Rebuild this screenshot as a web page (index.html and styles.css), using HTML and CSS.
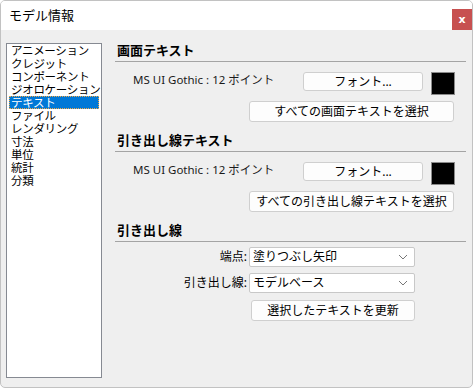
FILE: index.html
```html
<!DOCTYPE html>
<html lang="ja">
<head>
  <meta charset="UTF-8">
  <title>モデル情報</title>
  <link rel="stylesheet" href="styles.css">
</head>
<body>

  <div class="window">
    <div class="titlebar">
      <span class="title">モデル情報</span>
      <button class="close">x</button>
    </div>

    <div class="content">
      <ul class="list">
        <li>アニメーション</li>
        <li>クレジット</li>
        <li>コンポーネント</li>
        <li>ジオロケーション</li>
        <li class="selected">テキスト</li>
        <li>ファイル</li>
        <li>レンダリング</li>
        <li>寸法</li>
        <li>単位</li>
        <li>統計</li>
        <li>分類</li>
      </ul>

      <div class="pane">
        <div class="section">
          <h2>画面テキスト</h2>
          <div class="font-row">
            <span class="font-name">MS UI Gothic : 12 ポイント</span>
            <button class="btn font-btn">フォント...</button>
            <span class="swatch"></span>
          </div>
          <div class="select-row">
            <button class="btn select-btn">すべての画面テキストを選択</button>
          </div>
        </div>

        <div class="section">
          <h2>引き出し線テキスト</h2>
          <div class="font-row">
            <span class="font-name">MS UI Gothic : 12 ポイント</span>
            <button class="btn font-btn">フォント...</button>
            <span class="swatch"></span>
          </div>
          <div class="select-row">
            <button class="btn select-btn">すべての引き出し線テキストを選択</button>
          </div>
        </div>

        <div class="section">
          <h2>引き出し線</h2>
          <div class="form">
            <label>端点:</label>
            <div class="dropdown">
              <span>塗りつぶし矢印</span>
              <svg width="10" height="6" viewBox="0 0 10 6"><path d="M1 1 L5 5 L9 1" fill="none" stroke="#777" stroke-width="1"/></svg>
            </div>
            <label>引き出し線:</label>
            <div class="dropdown">
              <span>モデルベース</span>
              <svg width="10" height="6" viewBox="0 0 10 6"><path d="M1 1 L5 5 L9 1" fill="none" stroke="#777" stroke-width="1"/></svg>
            </div>
            <span></span>
            <button class="btn update-btn">選択したテキストを更新</button>
          </div>
        </div>
      </div>
    </div>
  </div>

</body>
</html>
```

FILE: styles.css
```css
body {
  margin: 0;
  font-family: "Noto Sans", "Noto Sans CJK JP", sans-serif;
  font-size: 12px;
  color: #000;
  background: #fff;
}

.window {
  width: 473px;
  height: 388px;
  box-sizing: border-box;
  border: 1px solid #c2c2c2;
  border-radius: 5px;
  background: #efefef;
  overflow: hidden;
}

.titlebar {
  height: 29px;
  background: #fff;
  display: flex;
  justify-content: space-between;
  align-items: flex-end;
}

.title {
  align-self: center;
  margin-left: 8px;
  font-size: 13px;
  line-height: 16px;
  padding-bottom: 1px;
}

.close {
  width: 20px;
  height: 21px;
  margin: 0;
  padding: 0;
  border: none;
  background: #c75050;
  color: #fff;
  font-family: "DejaVu Sans", sans-serif;
  font-weight: bold;
  font-size: 11px;
  line-height: 19px;
}

.content {
  display: flex;
  padding: 13px 0 0 5px;
}

.list {
  list-style: none;
  margin: 0;
  padding: 0 2px;
  width: 90px;
  height: 333px;
  background: #fff;
  border: 1px solid #868a92;
  font-size: 11.5px;
  letter-spacing: -0.3px;
}

.list li {
  height: 13px;
  line-height: 13px;
  padding-left: 2px;
  white-space: nowrap;
}

.list li.selected {
  background: #0078d7;
  color: #fff;
  outline: 1px dotted #f0a848;
  outline-offset: -1px;
}

.pane {
  flex: 1;
  margin-left: 13px;
  margin-right: 6px;
  margin-top: -3px;
}

.section {
  margin-bottom: 8px;
}

.section h2 {
  margin: 0;
  font-size: 13px;
  font-weight: bold;
  line-height: 20px;
  height: 21px;
  padding-left: 2px;
  border-bottom: 1px solid #a4a4a4;
}

.font-row {
  display: flex;
  align-items: center;
  margin-top: 9px;
  height: 24px;
  margin-right: 11px;
}

.font-name {
  margin-left: 18px;
  margin-top: -7px;
  line-height: 14px;
  font-size: 11.5px;
  color: #1a1a1a;
}

.btn {
  margin: 0;
  padding: 0;
  font-family: inherit;
  font-size: 12px;
  color: #000;
  background: #fdfdfd;
  border: 1px solid #cfcfcf;
  border-radius: 3px;
  line-height: 16px;
}

.font-btn {
  margin-left: auto;
  width: 120px;
  height: 19px;
  margin-top: -3px;
}

.swatch {
  width: 22px;
  height: 21px;
  margin-left: 8px;
  background: #000;
  border: 1px solid #8a8a8a;
}

.select-row {
  display: flex;
  justify-content: flex-end;
  margin-top: 6px;
  margin-right: 12px;
}

.select-btn {
  width: 205px;
  height: 21px;
}

.form {
  display: grid;
  grid-template-columns: 132px 166px;
  column-gap: 2px;
  row-gap: 6px;
  align-items: center;
  margin-top: 5px;
}

.form label {
  text-align: right;
  line-height: 16px;
}

.dropdown {
  height: 18px;
  display: flex;
  justify-content: space-between;
  align-items: center;
  padding: 0 6px 0 3px;
  background: #fff;
  border: 1px solid #c8c8c8;
  border-radius: 2px;
  line-height: 16px;
  width: 155px;
}

.update-btn {
  width: 164px;
  height: 21px;
  margin-left: 2px;
  margin-top: 1px;
}
```
